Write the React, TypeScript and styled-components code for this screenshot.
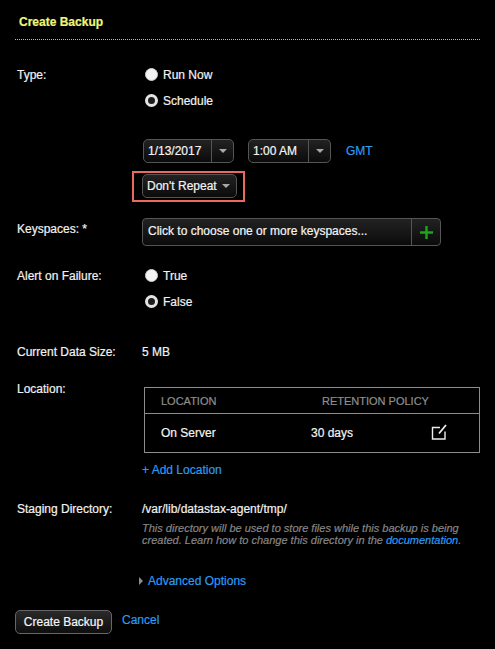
import React from "react";
import styled, { createGlobalStyle } from "styled-components";

const GlobalStyle = createGlobalStyle`
  html, body {
    margin: 0;
    background: #000;
  }
  body {
    font-family: "Liberation Sans", Arial, sans-serif;
    font-size: 12px;
    line-height: 14px;
    color: #fff;
    -webkit-text-stroke: 0.2px currentColor;
  }
`;

const Page = styled.div`
  width: 495px;
  height: 649px;
  box-sizing: border-box;
  padding: 15px 15px 0;
  background: #000;
  overflow: hidden;
`;

const Header = styled.h3`
  margin: 0;
  height: 25px;
  box-sizing: border-box;
  padding: 0 4px;
  border-bottom: 1px dotted #bdbdbd;
  font-size: 12px;
  line-height: 14px;
  font-weight: bold;
  color: #eef57a;
`;

const Row = styled.div<{ $top: number }>`
  display: grid;
  grid-template-columns: 127px 1fr;
  margin-top: ${({ $top }) => $top}px;
`;

const Label = styled.div<{ $offset?: number }>`
  padding-left: 2px;
  padding-top: ${({ $offset }) => $offset ?? 0}px;
  color: #f2f2f2;
`;

const Value = styled.div`
  color: #f2f2f2;
`;

const RadioList = styled.div`
  display: flex;
  flex-direction: column;
  gap: 12px;
  padding-left: 3px;
`;

const RadioRow = styled.label`
  display: flex;
  align-items: center;
  gap: 5px;
  height: 14px;
  color: #f2f2f2;
`;

const RadioDot = styled.span<{ $checked?: boolean }>`
  width: 13px;
  height: 13px;
  box-sizing: border-box;
  border-radius: 50%;
  margin-top: -2px;
  background: ${({ $checked }) => ($checked ? "#1c1c1c" : "#f4f4f4")};
  border: ${({ $checked }) => ($checked ? "3px solid #e4e4e4" : "1px solid #ccc")};
`;

const ControlRow = styled.div`
  display: flex;
  align-items: center;
  gap: 14px;
  padding-left: 1px;
`;

const Select = styled.div<{ $width: number }>`
  display: flex;
  align-items: stretch;
  width: ${({ $width }) => $width}px;
  height: 24px;
  box-sizing: border-box;
  border: 1px solid #555;
  border-radius: 5px;
  background: linear-gradient(#222, #0b0b0b);
  color: #f4f4f4;
`;

const SelectText = styled.span`
  flex: 1;
  padding-left: 4px;
  line-height: 22px;
  white-space: nowrap;
`;

const SelectArrow = styled.span<{ $split?: boolean }>`
  width: 21px;
  display: flex;
  align-items: center;
  justify-content: center;
  border-left: ${({ $split }) => ($split ? "1px solid #555" : "none")};

  &::after {
    content: "";
    border-left: 4px solid transparent;
    border-right: 4px solid transparent;
    border-top: 4px solid #a8a8a8;
  }
`;

const Link = styled.a<{ $size?: number }>`
  color: #2b9bf4;
  text-decoration: none;
  font-size: ${({ $size }) => $size ?? 12}px;
`;

const GmtLink = styled(Link)`
  margin-left: 1px;
`;

const CancelLink = styled(Link)`
  padding-top: 3px;
`;

const Highlight = styled.div`
  width: 113px;
  height: 31px;
  box-sizing: border-box;
  margin: 8px 0 0 -10px;
  padding: 1px 0 0 8px;
  border: 2px solid #ea6b5e;
`;

const KeyspaceBox = styled.div`
  display: flex;
  width: 299px;
  height: 28px;
  box-sizing: border-box;
  border: 1px solid #555;
  border-radius: 4px;
  background: linear-gradient(#222, #0b0b0b);
  color: #f4f4f4;
`;

const KeyspaceText = styled.span`
  flex: 1;
  padding-left: 5px;
  line-height: 25px;
`;

const AddButton = styled.span`
  width: 28px;
  display: flex;
  align-items: center;
  justify-content: center;
  border-left: 1px solid #555;
`;

const LocationTable = styled.div`
  width: 336px;
  margin: 5px 0 0 2px;
  box-sizing: border-box;
  border: 1px solid #8c8c8c;
`;

const TableRow = styled.div<{ $head?: boolean }>`
  display: grid;
  grid-template-columns: 150px 120px 1fr;
  align-items: center;
  height: ${({ $head }) => ($head ? "26px" : "38px")};
  padding-left: 16px;
  padding-top: ${({ $head }) => ($head ? "1px" : "0")};
  border-bottom: ${({ $head }) => ($head ? "1px solid #8c8c8c" : "none")};
  box-sizing: ${({ $head }) => ($head ? "border-box" : "content-box")};
  font-size: ${({ $head }) => ($head ? "11px" : "12px")};
  color: ${({ $head }) => ($head ? "#8f8f8f" : "#f4f4f4")};
`;

const RetentionHead = styled.span`
  padding-left: 11px;
  white-space: nowrap;
`;

const EditCell = styled.span`
  display: flex;
  justify-content: flex-end;
  margin-top: -2px;
  padding-right: 32px;
`;

const Note = styled.p`
  margin: 6px 0 0;
  width: 335px;
  font-size: 11px;
  line-height: 12px;
  font-style: italic;
  color: #868686;
`;

const Advanced = styled.div`
  display: flex;
  align-items: center;
  gap: 5px;
  margin: 28px 0 0 124px;
`;

const Caret = styled.span`
  border-top: 4px solid transparent;
  border-bottom: 4px solid transparent;
  border-left: 4px solid #8d8d8d;
`;

const Footer = styled.div`
  display: flex;
  align-items: flex-start;
  gap: 10px;
  margin-top: 22px;
`;

const PrimaryButton = styled.button`
  width: 97px;
  height: 24px;
  padding: 0;
  border: 1px solid #666;
  border-radius: 5px;
  background: linear-gradient(#2a2a2a, #0e0e0e);
  color: #f6f6f6;
  font: 12px/14px "Liberation Sans", Arial, sans-serif;
  -webkit-text-stroke: 0.2px currentColor;
`;

const Radio: React.FC<{ label: string; checked?: boolean }> = ({ label, checked }) => (
  <RadioRow>
    <RadioDot $checked={checked} />
    {label}
  </RadioRow>
);

export default function App() {
  return (
    <Page>
      <GlobalStyle />
      <Header>Create Backup</Header>

      <Row $top={28}>
        <Label>Type:</Label>
        <RadioList>
          <Radio label="Run Now" />
          <Radio label="Schedule" checked />
        </RadioList>
      </Row>

      <Row $top={31}>
        <span />
        <div>
          <ControlRow>
            <Select $width={91}>
              <SelectText>1/13/2017</SelectText>
              <SelectArrow $split />
            </Select>
            <Select $width={83}>
              <SelectText>1:00 AM</SelectText>
              <SelectArrow $split />
            </Select>
            <GmtLink>GMT</GmtLink>
          </ControlRow>
          <Highlight>
            <Select $width={95}>
              <SelectText>Don't Repeat</SelectText>
              <SelectArrow />
            </Select>
          </Highlight>
        </div>
      </Row>

      <Row $top={16}>
        <Label $offset={4}>Keyspaces: *</Label>
        <KeyspaceBox>
          <KeyspaceText>Click to choose one or more keyspaces...</KeyspaceText>
          <AddButton>
            <svg width="13" height="13" viewBox="0 0 13 13">
              <path d="M6.5 0v13M0 6.5h13" stroke="#18a818" strokeWidth="2.4" />
            </svg>
          </AddButton>
        </KeyspaceBox>
      </Row>

      <Row $top={23}>
        <Label>Alert on Failure:</Label>
        <RadioList>
          <Radio label="True" />
          <Radio label="False" checked />
        </RadioList>
      </Row>

      <Row $top={36}>
        <Label>Current Data Size:</Label>
        <Value>5 MB</Value>
      </Row>

      <Row $top={23}>
        <Label>Location:</Label>
        <div>
          <LocationTable>
            <TableRow $head>
              <span>LOCATION</span>
              <RetentionHead>RETENTION POLICY</RetentionHead>
            </TableRow>
            <TableRow>
              <span>On Server</span>
              <span>30 days</span>
              <EditCell>
                <svg width="16" height="16" viewBox="0 0 16 16" fill="none">
                  <path d="M9 3.5H1.5V15H14V7.5" stroke="#eee" strokeWidth="1.4" />
                  <path d="M8 9.5 15 1" stroke="#eee" strokeWidth="1.8" />
                </svg>
              </EditCell>
            </TableRow>
          </LocationTable>
          <Row $top={10}>
            <Link>+ Add Location</Link>
          </Row>
        </div>
      </Row>

      <Row $top={25}>
        <Label>Staging Directory:</Label>
        <div>
          <Value>/var/lib/datastax-agent/tmp/</Value>
          <Note>
            This directory will be used to store files while this backup is being created. Learn
            how to change this directory in the <Link $size={11}>documentation</Link>.
          </Note>
        </div>
      </Row>

      <Advanced>
        <Caret />
        <Link>Advanced Options</Link>
      </Advanced>

      <Footer>
        <PrimaryButton>Create Backup</PrimaryButton>
        <CancelLink>Cancel</CancelLink>
      </Footer>
    </Page>
  );
}
